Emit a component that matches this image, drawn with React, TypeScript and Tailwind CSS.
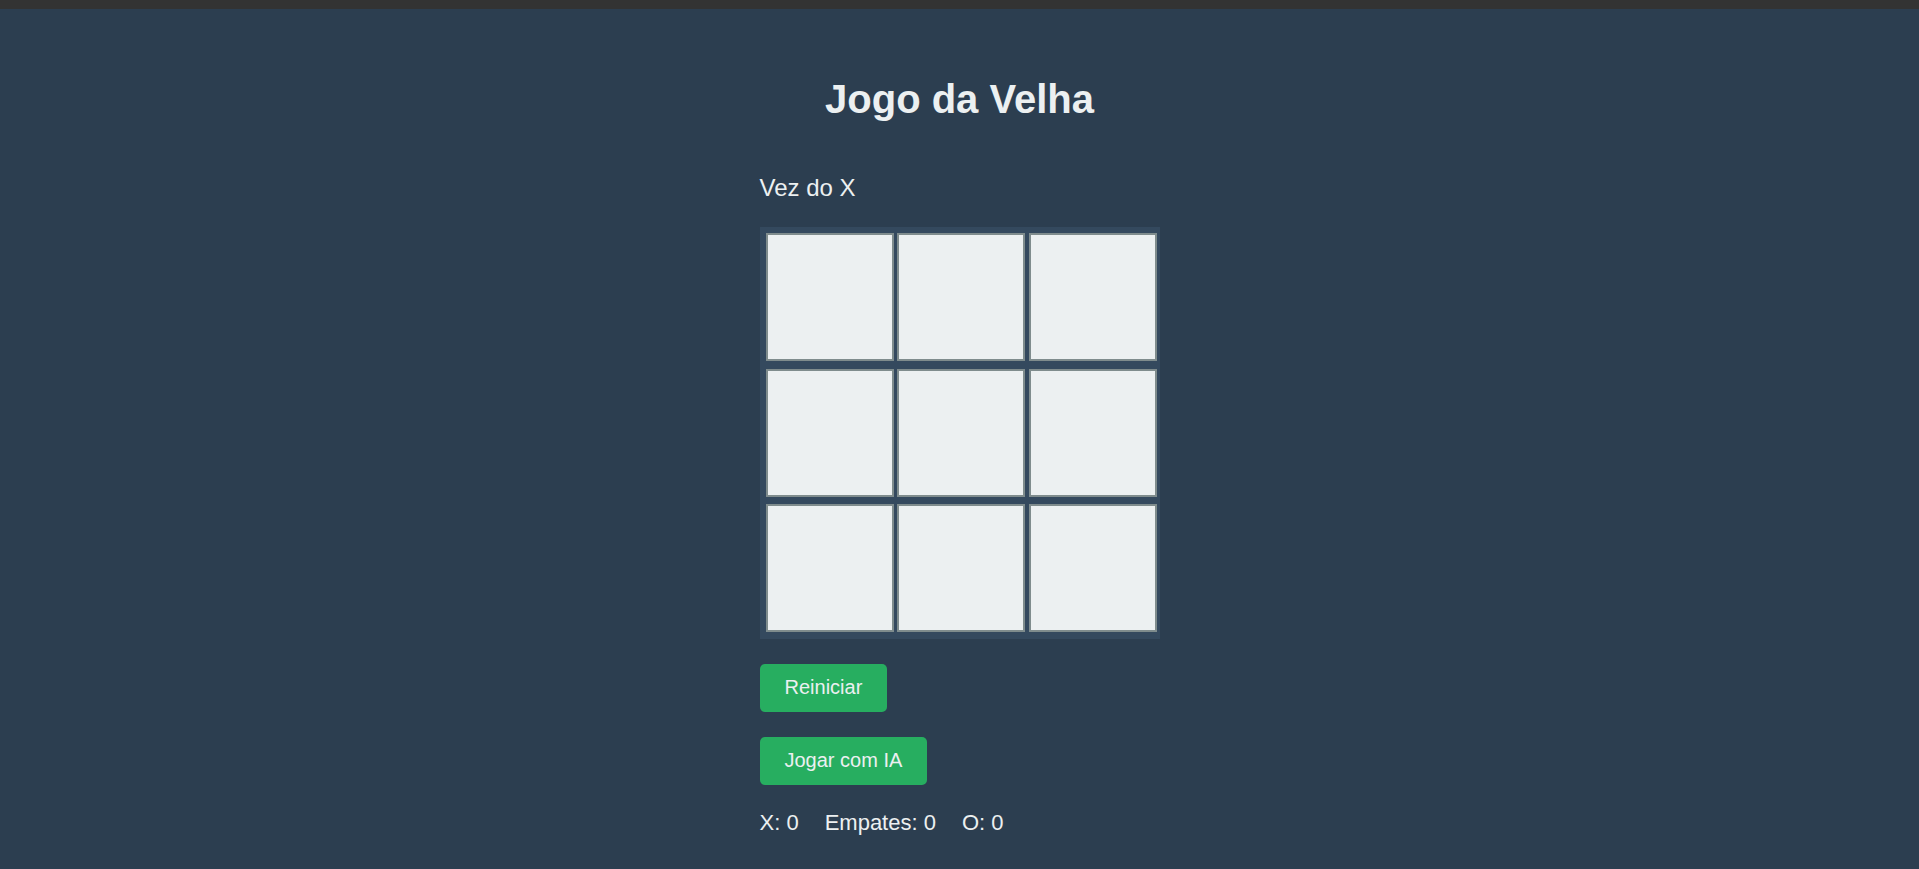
import React, { useState } from "react";

export default function App() {
  const [cells, setCells] = useState<(string | null)[]>(Array(9).fill(null));
  const rows = [0, 1, 2];
  return (
    <div className="min-h-screen bg-[#2c3e50] font-['Liberation_Sans',Arial,sans-serif] text-[#ecf0f1]">
      <div className="h-[9px] bg-[#333333]" />
      <div className="w-[400px] mx-auto flex flex-col items-start pb-[20px]">
        <h1 className="self-stretch text-center text-[40px] font-bold leading-[46px] mt-[67px]">
          Jogo da Velha
        </h1>
        <p className="mt-[52px] text-[24px] leading-[28px]">Vez do X</p>
        <div className="mt-[25px] w-[400px] bg-[#34495e] pt-[6px] pb-[7px] pl-[6px] pr-[3px] flex flex-col gap-[7.5px]">
          {rows.map((r) => (
            <div key={r} className="flex gap-[3.5px]">
              {[0, 1, 2].map((c) => {
                const i = r * 3 + c;
                return (
                  <button
                    key={c}
                    onClick={() => {
                      const n = [...cells];
                      n[i] = "X";
                      setCells(n);
                    }}
                    className="w-[128px] h-[128px] bg-[#ecf0f1] border-2 border-[#7f8c8d] text-[#2c3e50] text-[48px] font-bold"
                  >
                    {cells[i]}
                  </button>
                );
              })}
            </div>
          ))}
        </div>
        <button
          onClick={() => setCells(Array(9).fill(null))}
          className="mt-[25px] bg-[#27ae60] text-[#ecf0f1] text-[20px] leading-[23px] pt-[12px] pb-[13px] px-[25px] rounded-[5px]"
        >
          Reiniciar
        </button>
        <button className="mt-[25px] bg-[#27ae60] text-[#ecf0f1] text-[20px] leading-[23px] pt-[12px] pb-[13px] px-[25px] rounded-[5px]">
          Jogar com IA
        </button>
        <div className="mt-[25px] flex gap-[26px] text-[22px] leading-[25px]">
          <span>X: 0</span>
          <span>Empates: 0</span>
          <span>O: 0</span>
        </div>
      </div>
    </div>
  );
}
